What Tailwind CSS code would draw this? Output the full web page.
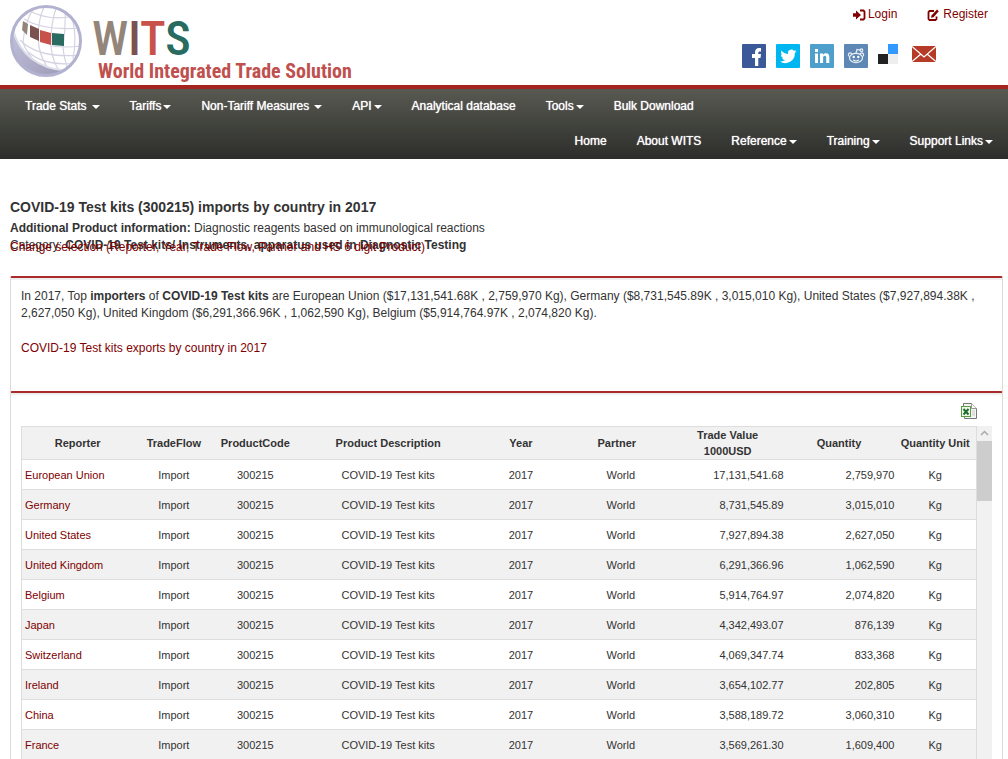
<!DOCTYPE html>
<html lang="en">
<head>
<meta charset="utf-8">
<title>COVID-19 Test kits imports by country | WITS</title>
<script src="https://cdn.jsdelivr.net/npm/@tailwindcss/browser@4"></script>
</head>
<body class="h-screen overflow-hidden bg-white font-['Liberation_Sans',Arial,sans-serif] text-xs leading-[17px] text-[#333]">
<header class="flex h-[89px] justify-between border-b-4 border-[#a42420] pr-5 pl-2">
  <a href="#" class="flex gap-2" aria-label="WITS home">
    <svg class="mt-[3px] size-[76px]" viewBox="0 0 76 76" aria-hidden="true">
      <defs>
        <linearGradient id="shade" x1="0" y1="0" x2="1" y2="1"><stop offset="0" stop-color="#c4c4de"/><stop offset="1" stop-color="#9a9ab4"/></linearGradient>
        <clipPath id="disc"><circle cx="38" cy="38" r="34"/></clipPath>
      </defs>
      <circle cx="38" cy="38" r="34" fill="#fff"/>
      <g clip-path="url(#disc)">
        <g fill="none" stroke="#d5d3e3" stroke-width="1.2">
          <path d="M24 9Q40 17 62 14M16 16Q36 28 72 25M43 43Q58 45 74 43M12 37Q30 56 74 52M20 49Q38 64 68 60"/>
          <path d="M27 4Q17 16 15 40Q20 52 30 62M37 2Q28 20 31 44Q34 58 42 68M49 2Q42 22 43 44Q45 60 52 69M57 4Q58 24 55 44Q56 56 60 66M62 10Q70 28 65 56"/>
        </g>
        <path d="M4 26Q8 43 22 54Q38 66 54 67L48 78H-2V26Z" fill="url(#shade)"/>
        <path d="M5 27Q10 45 24 56Q38 66 54 67" fill="none" stroke="#dedeeb" stroke-width="2"/>
        <path d="M15 18l5 3-1 11-5-5z" fill="#94857a"/>
        <path d="M22 22l9 4v12l-9-4z" fill="#7b5250"/>
        <path d="M32 27l11 3v12l-11-3z" fill="#c8524a"/>
        <path d="M44 30l12 1v12l-12-1z" fill="#296b60"/>
      </g>
      <circle cx="38" cy="38" r="34.500" fill="none" stroke="#b2b2d0" stroke-width="3"/>
    </svg>
    <span class="flex flex-col font-['Roboto_Condensed','Liberation_Sans',sans-serif]">
      <span class="mt-[17px] text-[48px] leading-[44px] font-medium"><span class="text-[#94857a]">W</span><span class="text-[#7b5250]">I</span><span class="text-[#c8524a]">T</span><span class="text-[#296b60]">S</span></span>
      <span class="pl-1.5 text-xl leading-5 font-bold text-[#c0504d]">World Integrated Trade Solution</span>
    </span>
  </a>
  <div class="flex flex-col gap-[21px] pt-[6px]">
    <div class="flex justify-end gap-[30px] text-[#800000]">
      <a href="#" class="flex items-center gap-0.5"><svg class="h-3 w-[14px]" viewBox="0 0 14 12" aria-hidden="true"><path d="M1 4.300h3V1.500l5 4.500-5 4.500V7.700H1z" fill="currentColor"/><path d="M8 1.500h3.500l1 1v7l-1 1H8" fill="none" stroke="currentColor" stroke-width="1.800"/></svg>Login</a>
      <a href="#" class="flex items-center gap-1"><svg class="size-3" viewBox="0 0 12 12" aria-hidden="true"><path d="M7 2H2.500L1.500 3v7l1 1h6l1-1V7.500" fill="none" stroke="currentColor" stroke-width="1.800"/><path d="M4.500 6.500L10 .5 11.800 2.300 6.500 8.200 4 8.800z" fill="currentColor"/></svg>Register</a>
    </div>
    <div class="mr-[52px] flex justify-end gap-2.5">
      <a href="#" aria-label="Facebook"><svg class="size-6" viewBox="0 0 24 24"><rect width="24" height="24" rx="1" fill="#3b5998"/><path d="M13 22v-8h-3v-4h3V8.500C13 5.500 14.500 4 17 4H19v3.500h-1.200c-1.200 0-1.500.6-1.500 1.500v1H19l-.5 4h-2.200v8z" fill="#fff"/></svg></a>
      <a href="#" aria-label="Twitter"><svg class="size-6" viewBox="0 0 24 24"><rect width="24" height="24" rx="1" fill="#00b6f1"/><path d="M20.500 7.300c-.6.300-1.200.5-1.900.5.700-.4 1.200-1 1.400-1.800-.6.400-1.300.7-2.100.8A3.300 3.300 0 0 0 12.200 10C9.500 9.900 7 8.600 5.400 6.500c-.9 1.500-.4 3.400 1 4.400-.5 0-1-.1-1.500-.4 0 1.600 1.100 3 2.700 3.300-.5.100-1 .1-1.500 0 .4 1.300 1.600 2.300 3.100 2.300A6.700 6.700 0 0 1 4 17.500 9.500 9.500 0 0 0 18.800 9c.7-.5 1.200-1.100 1.700-1.700z" fill="#fff"/></svg></a>
      <a href="#" aria-label="LinkedIn"><svg class="size-6" viewBox="0 0 24 24"><rect width="24" height="24" rx="1" fill="#4f9fcc"/><path d="M5 9.500h3V19H5zM5 5h3v3H5zM10 9.500h3v1.300c.6-1 1.600-1.600 3-1.600 2.500 0 3.300 1.600 3.300 4V19h-3.100v-5.200c0-1.300-.3-2.100-1.400-2.100-1.200 0-1.700.9-1.700 2.200V19H10z" fill="#fff"/></svg></a>
      <a href="#" aria-label="Reddit"><svg class="size-6" viewBox="0 0 24 24"><rect width="24" height="24" rx="1" fill="#5f87b3"/><g fill="none" stroke="#e8eff6" stroke-width="1.200"><ellipse cx="12" cy="14" rx="6.500" ry="4.600"/><path d="M12 9.200l1-3.700 3.200.6M5.800 12.500a1.800 1.800 0 1 1 2-2.500M18.200 12.500a1.800 1.800 0 1 0-2-2.500M9 16q3 1.800 6 0"/><circle cx="17.500" cy="6.200" r="1.300"/></g><g fill="#fff"><circle cx="9.700" cy="13" r="1.200"/><circle cx="14.300" cy="13" r="1.200"/></g></svg></a>
      <a href="#" aria-label="Delicious"><svg class="size-6" viewBox="0 0 24 24"><path d="M10 0h10v10H10z" fill="#3399ff"/><path d="M0 10h10v10H0z" fill="#222"/><path d="M10 10h10v10H10z" fill="#eee"/></svg></a>
      <a href="#" aria-label="Email"><svg class="size-6" viewBox="0 0 24 24"><path d="M0 2h24v16H0z" fill="#b53a28"/><path d="M0 2.500l12 10.500 12-10.500M0 17.500L9 10M24 17.500L15 10" fill="none" stroke="#fff" stroke-width="1.300"/></svg></a>
    </div>
  </div>
</header>

<nav class="bg-linear-to-b from-[#585a52] to-[#2d2e2a] px-[25px] py-[9px] text-white text-shadow-[0_0_1px_white]" aria-label="Main">
  <ul class="flex gap-[30px]">
    <li><a href="#" class="flex items-center gap-[5px]">Trade Stats <span class="border-x-4 border-t-4 border-x-transparent border-t-white"></span></a></li>
    <li><a href="#" class="flex items-center gap-0.5">Tariffs<span class="border-x-4 border-t-4 border-x-transparent border-t-white"></span></a></li>
    <li><a href="#" class="flex items-center gap-[5px]">Non-Tariff Measures <span class="border-x-4 border-t-4 border-x-transparent border-t-white"></span></a></li>
    <li><a href="#" class="flex items-center gap-0.5">API<span class="border-x-4 border-t-4 border-x-transparent border-t-white"></span></a></li>
    <li><a href="#">Analytical database</a></li>
    <li><a href="#" class="flex items-center gap-0.5">Tools<span class="border-x-4 border-t-4 border-x-transparent border-t-white"></span></a></li>
    <li><a href="#">Bulk Download</a></li>
  </ul>
  <ul class="-mr-2.5 mt-[18px] flex justify-end gap-[30px]">
    <li><a href="#">Home</a></li>
    <li><a href="#">About WITS</a></li>
    <li><a href="#" class="flex items-center gap-0.5">Reference<span class="border-x-4 border-t-4 border-x-transparent border-t-white"></span></a></li>
    <li><a href="#" class="flex items-center gap-0.5">Training<span class="border-x-4 border-t-4 border-x-transparent border-t-white"></span></a></li>
    <li><a href="#" class="flex items-center gap-0.5">Support Links<span class="border-x-4 border-t-4 border-x-transparent border-t-white"></span></a></li>
  </ul>
</nav>

<main class="pr-[5px] pl-2.5">
  <h1 class="pt-[38px] text-sm leading-5 font-bold">COVID-19 Test kits (300215) imports by country in 2017</h1>
  <div class="relative mt-[3px]">
    <p><b>Additional Product information:</b> Diagnostic reagents based on immunological reactions</p>
    <p>Category: <b>COVID-19 Test kits/ Instruments, apparatus used in Diagnostic Testing</b></p>
    <a href="#" class="absolute top-[19px] left-0 text-[#800000]">Change selection (Reporter, Year, Trade Flow, Partner and HS 6 digit Product)</a>
  </div>

  <section class="mt-[22px] h-[115px] rounded-t-xs border-x border-t-2 border-x-[#dcdcd4] border-t-[#a92a2a] px-2.5 pt-2.5 inset-shadow-[0_2px_1px_#eee]">
    <p>In 2017, Top <b>importers</b> of <b>COVID-19 Test kits</b> are European Union ($17,131,541.68K , 2,759,970 Kg), Germany ($8,731,545.89K , 3,015,010 Kg), United States ($7,927,894.38K , 2,627,050 Kg), United Kingdom ($6,291,366.96K , 1,062,590 Kg), Belgium ($5,914,764.97K , 2,074,820 Kg).</p>
    <p class="mt-[18px]"><a href="#" class="text-[#800000]">COVID-19 Test kits exports by country in 2017</a></p>
  </section>

  <section class="rounded-t-xs border-x border-t-2 border-x-[#dcdcd4] border-t-[#a92a2a] px-2.5 pt-2.5 inset-shadow-[0_2px_1px_#eee]">
    <div class="mr-[15px] flex justify-end pb-[7px]">
      <button type="button" aria-label="Export to Excel"><svg class="block h-4 w-4" viewBox="0 0 16 16"><path d="M2.500 3V.5h8l5 5v10h-12V13" fill="#f4f4f4" stroke="#777"/><path d="M10.500.5v5h5" fill="#fff" stroke="#999"/><path d="M11 8h3M11 10h3M11 12h3" stroke="#ccc"/><rect x=".5" y="3.500" width="9" height="10" fill="#eef6ea" stroke="#5b9c45"/><path d="M2.500 6l5 5.500M7.500 6l-5 5.500" stroke="#1f6b2c" stroke-width="2"/></svg></button>
    </div>
    <div class="flex text-[11px] leading-4">
      <table class="flex-1 table-fixed border-collapse border border-[#ddd]">
        <colgroup><col class="w-[112px]"><col class="w-[81px]"><col class="w-[82px]"><col class="w-[184px]"><col class="w-[82px]"><col class="w-[110px]"><col class="w-[112px]"><col class="w-[111px]"><col class="w-[82px]"></colgroup>
        <thead>
          <tr class="h-[33px] bg-[#f1f1f1]">
            <th scope="col">Reporter</th><th scope="col">TradeFlow</th><th scope="col">ProductCode</th><th scope="col">Product Description</th><th scope="col">Year</th><th scope="col">Partner</th><th scope="col">Trade Value<br>1000USD</th><th scope="col">Quantity</th><th scope="col" class="whitespace-nowrap">Quantity Unit</th>
          </tr>
        </thead>
        <tbody id="rows"></tbody>
      </table>
      <div class="flex w-[15px] flex-col bg-[#f1f1f1]" aria-hidden="true">
        <svg class="h-[15px] w-[15px]" viewBox="0 0 15 15"><path d="M4 9l3.500-3.500L11 9" fill="none" stroke="#aaa" stroke-width="1.500"/></svg>
        <div class="h-[60px] bg-[#cdcdcd]"></div>
      </div>
    </div>
  </section>
</main>

<script>
const data = [
  ["European Union", "17,131,541.68", "2,759,970"],
  ["Germany", "8,731,545.89", "3,015,010"],
  ["United States", "7,927,894.38", "2,627,050"],
  ["United Kingdom", "6,291,366.96", "1,062,590"],
  ["Belgium", "5,914,764.97", "2,074,820"],
  ["Japan", "4,342,493.07", "876,139"],
  ["Switzerland", "4,069,347.74", "833,368"],
  ["Ireland", "3,654,102.77", "202,805"],
  ["China", "3,588,189.72", "3,060,310"],
  ["France", "3,569,261.30", "1,609,400"]
];
document.getElementById("rows").innerHTML = data.map(([name, value, qty]) => `
  <tr class="h-[30px] border-t border-[#ddd] text-center even:bg-[#f1f1f1]">
    <td class="pl-[3px] text-left"><a href="#" class="text-[#800000]">${name}</a></td>
    <td>Import</td><td>300215</td><td>COVID-19 Test kits</td><td>2017</td><td class="pl-2">World</td>
    <td class="text-right">${value}</td><td class="text-right">${qty}</td><td>Kg</td>
  </tr>`).join("");
</script>
</body>
</html>
